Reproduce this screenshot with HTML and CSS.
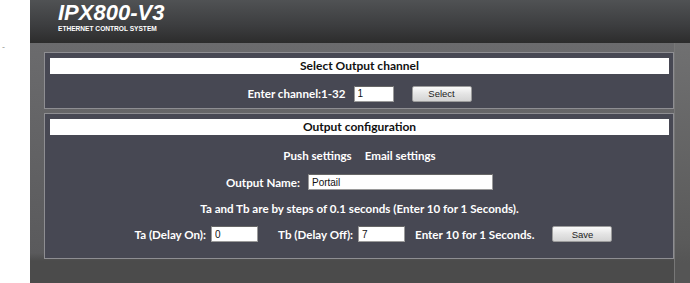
FILE: index.html
```html
<!DOCTYPE html>
<html lang="en">

<head>
    <meta charset="UTF-8">
    <meta name="viewport" content="width=device-width, initial-scale=1.0">
    <title>IPX800-V3</title>
    <link rel="stylesheet" href="styles.css">
</head>

<body>
    <div class="strip"><span class="mark">-</span></div>
    <div class="page">
        <header class="top">
            <div class="brand">IPX800-V3</div>
            <div class="tag">ETHERNET CONTROL SYSTEM</div>
        </header>
        <div class="content">
            <div class="main-col">
                <form class="panel">
                    <h2 class="panel-title">Select Output channel</h2>
                    <div class="row row-channel">
                        <label for="channel">Enter channel:1-32</label>
                        <input type="text" id="channel" class="field field-small" value="1">
                        <button type="button" class="btn">Select</button>
                    </div>
                </form>

                <form class="panel">
                    <h2 class="panel-title">Output configuration</h2>
                    <div class="row row-links">
                        <a href="#">Push settings</a>
                        <a href="#">Email settings</a>
                    </div>
                    <div class="row row-name">
                        <label for="name">Output Name:</label>
                        <input type="text" id="name" class="field field-name" value="Portail">
                    </div>
                    <p class="row row-note">Ta and Tb are by steps of 0.1 seconds (Enter 10 for 1 Seconds).</p>
                    <div class="row row-delay">
                        <label for="ta">Ta (Delay On):</label>
                        <input type="text" id="ta" class="field field-delay" value="0">
                        <label for="tb" class="lbl-tb">Tb (Delay Off):</label>
                        <input type="text" id="tb" class="field field-delay" value="7">
                        <span class="hint">Enter 10 for 1 Seconds.</span>
                        <button type="button" class="btn btn-save">Save</button>
                    </div>
                </form>
            </div>
            <div class="side-col"></div>
        </div>
    </div>
</body>

</html>
```

FILE: styles.css
```css
body {
    margin: 0;
    display: flex;
    height: 283px;
    overflow: hidden;
    font-family: Lato, "Open Sans", sans-serif;
    background-color: #fff;
}

.strip {
    width: 30px;
    flex: none;
    background-color: #fff;
}

.mark {
    display: block;
    margin: 42px 0 0 2px;
    font: 9px "Liberation Sans", sans-serif;
    color: #9a9a9a;
}

.page {
    flex: 1;
    display: flex;
    flex-direction: column;
}

.top {
    height: 43px;
    flex: none;
    box-sizing: border-box;
    padding: 0 0 0 28px;
    background: linear-gradient(#505254, #3c3d3f 60%, #2c2c2c);
    color: #fff;
}

.brand {
    font: italic bold 22px/24px "Liberation Sans", Arial, sans-serif;
    padding-top: 1px;
}

.tag {
    font: bold 6.6px/7px "Liberation Sans", Arial, sans-serif;
}

.content {
    flex: 1;
    display: flex;
}

.main-col {
    flex: 1;
    padding: 9px 0 0 14px;
    background: linear-gradient(#6b6b6d, #5a5a5c 210px, #4b4b4b 218px);
}

.side-col {
    width: 16px;
    flex: none;
    border-left: 1px solid #777;
    background: linear-gradient(#707071, #5a5a5a 200px, #555 220px);
}

.panel {
    width: 630px;
    box-sizing: border-box;
    border: 1px solid #8e8e92;
    background-color: #474853;
    padding: 5px 4px 0 5px;
    margin: 0 0 4px 0;
    color: #fff;
    font-size: 11.6px;
    font-weight: bold;
}

.panel-title {
    margin: 0;
    height: 16px;
    line-height: 16px;
    background-color: #fff;
    color: #111;
    font-size: 12px;
    text-align: center;
}

.row {
    display: flex;
    justify-content: center;
    align-items: center;
    margin: 0;
}

.row-channel {
    height: 19px;
    margin: 10px 0 5px 0;
}

.row-channel label {
    margin-right: 8px;
}

.row-links {
    height: 14px;
    margin: 13px 0 0 0;
    gap: 13px;
}

.row-links a {
    color: #fff;
    text-decoration: none;
}

.row-name {
    height: 16px;
    margin: 12px 0 0 0;
}

.row-name label {
    margin-right: 8px;
}

.row-note {
    height: 14px;
    margin-top: 11px;
}

.row-delay {
    height: 16px;
    margin: 11px 0 16px 0;
    padding-left: 28px;
}

.row-delay label {
    margin-right: 5px;
}

.lbl-tb {
    margin-left: 20px;
}

.hint {
    margin-left: 10px;
}

.field {
    box-sizing: border-box;
    height: 16px;
    border: 1px solid #9a9a9a;
    border-top-color: #666;
    padding: 0 3px;
    background-color: #fff;
    font: 10px "Liberation Sans", Arial, sans-serif;
    color: #111;
}

.field-small {
    width: 40px;
}

.field-name {
    width: 185px;
}

.field-delay {
    width: 47px;
}

.btn {
    box-sizing: border-box;
    width: 60px;
    height: 16px;
    margin-left: 18px;
    padding: 0;
    border: 1px solid #9c9c9c;
    border-radius: 2px;
    background: linear-gradient(#fafafa, #e4e4e4 50%, #d4d4d4);
    font: 9.5px "Liberation Sans", Arial, sans-serif;
    color: #222;
}

.btn-save {
    margin-left: 18px;
}
```
